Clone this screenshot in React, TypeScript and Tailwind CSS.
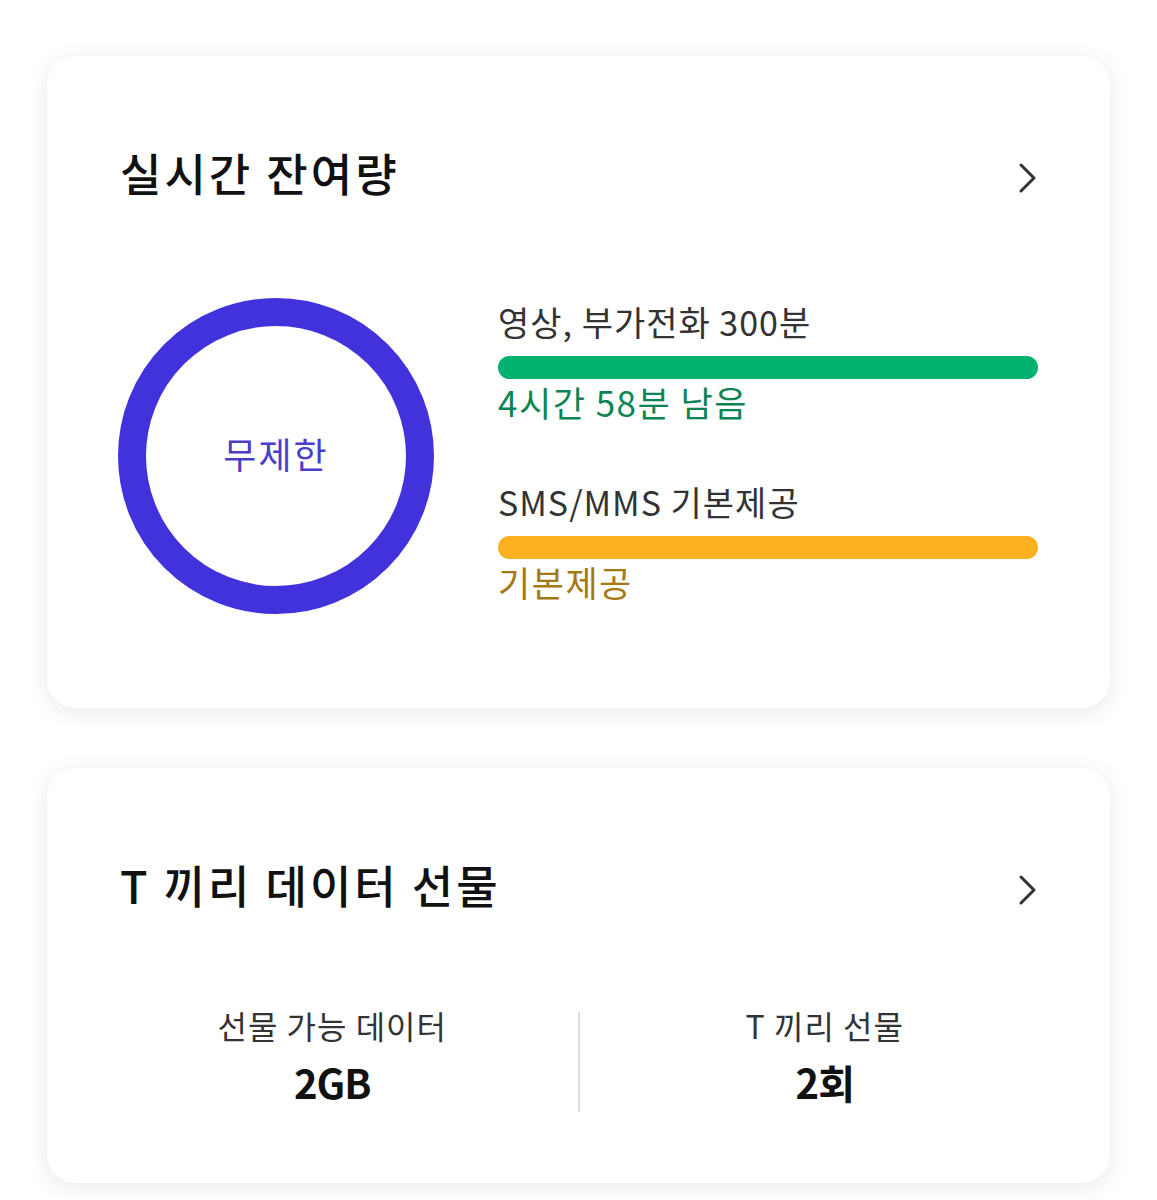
import React from "react";

const font = { fontFamily: '"Noto Sans CJK KR", "Noto Sans", sans-serif' };

function Chevron() {
    return (
        <svg width="20" height="34" viewBox="0 0 20 34" fill="none" className="shrink-0 mt-[10px]">
            <path d="M3 4 L16 17 L3 30" stroke="#333333" strokeWidth="3" strokeLinecap="round" strokeLinejoin="round" />
        </svg>
    );
}

function CardHeader({ title }: { title: string }) {
    return (
        <div className="flex items-center justify-between h-[50px] pl-[73px] pr-[72px]">
            <h2 className="text-[45px] leading-[50px] font-medium text-[#111111] tracking-[3px]">{title}</h2>
            <Chevron />
        </div>
    );
}

function UsageRow({ label, value, barClass, valueClass }: { label: string; value: string; barClass: string; valueClass: string }) {
    return (
        <div className="flex flex-col">
            <div className="text-[34px] leading-[40px] text-[#333333] tracking-[1px]">{label}</div>
            <div className={`mt-[14px] h-[23px] rounded-full ${barClass}`} />
            <div className={`mt-[3px] text-[35px] leading-[40px] tracking-[1.5px] ${valueClass}`}>{value}</div>
        </div>
    );
}

export default function App() {
    return (
        <div className="min-h-screen bg-white pt-[56px] px-[47px] pb-[40px]" style={font}>
            <div className="w-[1063px] rounded-[28px] bg-white shadow-[0_4px_22px_rgba(0,0,0,0.09)] pt-[92px] pb-[94px]">
                <CardHeader title="실시간 잔여량" />
                <div className="mt-[100px] flex items-center pl-[71px] pr-[72px]">
                    <div className="relative w-[316px] h-[316px] shrink-0">
                        <svg width="316" height="316" viewBox="0 0 316 316">
                            <circle cx="158" cy="158" r="144" fill="none" stroke="#4232dc" strokeWidth="28" />
                        </svg>
                        <div className="absolute inset-0 pb-[6px] flex items-center justify-center text-[36px] text-[#4a3dc9] tracking-[2px]">
                            무제한
                        </div>
                    </div>
                    <div className="ml-[64px] mb-[8px] flex-1 flex flex-col gap-[60px]">
                        <UsageRow label="영상, 부가전화 300분" value="4시간 58분 남음" barClass="bg-[#00b26e]" valueClass="text-[#0d8553]" />
                        <UsageRow label="SMS/MMS 기본제공" value="기본제공" barClass="bg-[#fdb120]" valueClass="text-[#a57812]" />
                    </div>
                </div>
            </div>

            <div className="mt-[60px] w-[1063px] rounded-[28px] bg-white shadow-[0_4px_22px_rgba(0,0,0,0.09)] pt-[92px] pb-[71px]">
                <CardHeader title="T 끼리 데이터 선물" />
                <div className="mt-[102px] flex items-start px-[40px]">
                    <div className="flex-1 -mt-[7px] flex flex-col items-center">
                        <div className="text-[32px] leading-[40px] text-[#333333] tracking-[1px]">선물 가능 데이터</div>
                        <div className="mt-[17px] text-[40px] leading-[40px] font-bold text-[#111111] tracking-[-1px]">2GB</div>
                    </div>
                    <div className="w-[2px] h-[100px] bg-[#dddddd]" />
                    <div className="flex-1 -mt-[7px] flex flex-col items-center">
                        <div className="text-[32px] leading-[40px] text-[#333333] tracking-[1px]">T 끼리 선물</div>
                        <div className="mt-[17px] text-[40px] leading-[40px] font-bold text-[#111111] tracking-[-1px]">2회</div>
                    </div>
                </div>
            </div>
        </div>
    );
}
